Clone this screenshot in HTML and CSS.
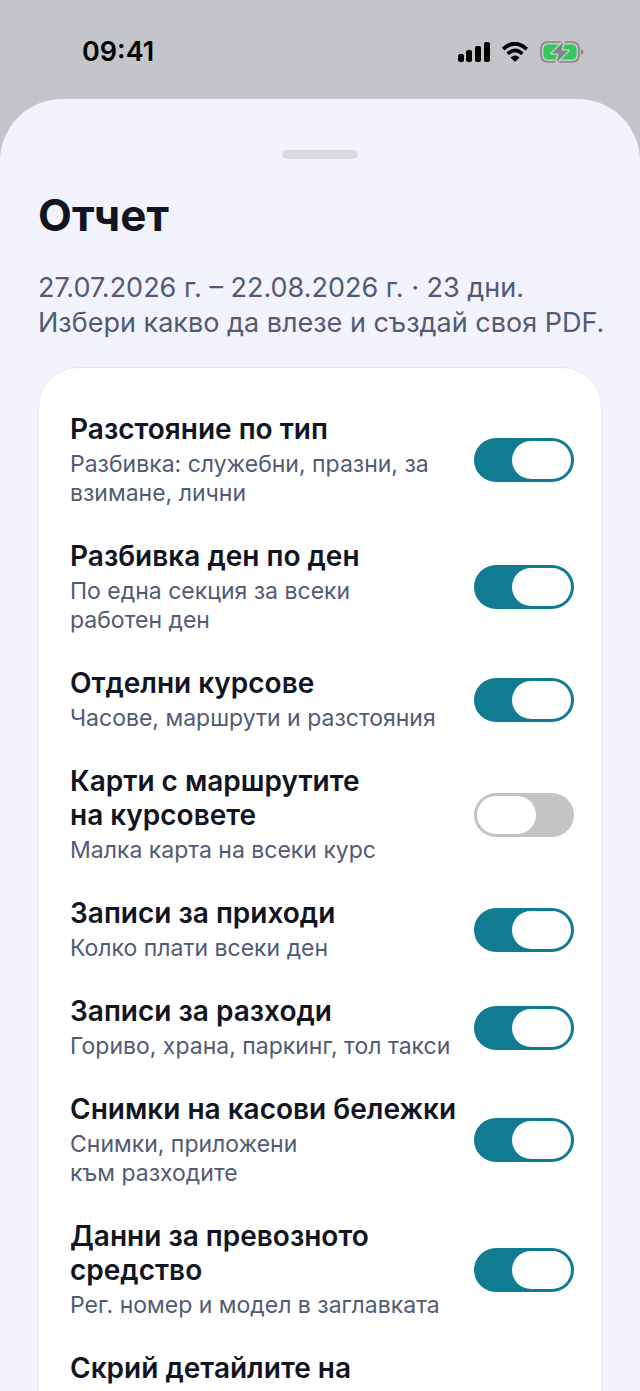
FILE: index.html
```
<!DOCTYPE html>
<html lang="bg">
<head>
    <meta charset="UTF-8">
    <meta name="viewport" content="width=device-width, initial-scale=1.0">
    <title>Отчет</title>
    <link rel="stylesheet" href="styles.css">
</head>
<body>
    <div class="status-bar">
        <span class="time">09:41</span>
        <div class="status-icons">
            <svg class="signal" viewBox="0 0 32 20">
                <rect x="0" y="12" width="6" height="8" rx="2"/>
                <rect x="8" y="8" width="6" height="12" rx="2"/>
                <rect x="17" y="4" width="6" height="16" rx="2"/>
                <rect x="26" y="0" width="6" height="20" rx="2"/>
            </svg>
            <svg class="wifi" viewBox="0 0 28 20">
                <path d="M2.2 7.2Q14-3.8 25.8 7.2" fill="none" stroke="#000" stroke-width="3.8"/>
                <path d="M6.6 11.8Q14 5 21.4 11.8" fill="none" stroke="#000" stroke-width="3.5"/>
                <path d="M9.5 15.4Q14 11.4 18.5 15.4L14.7 19.2Q14 19.8 13.3 19.2Z"/>
            </svg>
            <svg class="battery" viewBox="0 0 44 24">
                <rect x="1" y="2" width="38" height="20" rx="6.5" fill="none" stroke="#838488" stroke-width="1.6"/>
                <rect x="3.5" y="4.5" width="33" height="15" rx="4.5" fill="#34c759"/>
                <path d="M41 9.2Q43.6 10 43.6 12T41 14.8Z" fill="#838488"/>
                <path class="bolt" d="M23.5 1.5L11.5 13.5H18.5L16.5 22.5L28.5 10.5H21.5Z"/>
            </svg>
        </div>
    </div>

    <main class="sheet">
        <div class="grabber"></div>
        <h1 class="heading">Отчет</h1>
        <p class="intro">27.07.2026 г. – 22.08.2026 г. · 23 дни.<br>Избери какво да влезе и създай своя PDF.</p>

        <div class="card">
            <label class="option">
                <span class="text">
                    <span class="title">Разстояние по тип</span>
                    <span class="description">Разбивка: служебни, празни, за<br>взимане, лични</span>
                </span>
                <input class="switch" type="checkbox" checked>
            </label>
            <label class="option">
                <span class="text">
                    <span class="title">Разбивка ден по ден</span>
                    <span class="description">По една секция за всеки<br>работен ден</span>
                </span>
                <input class="switch" type="checkbox" checked>
            </label>
            <label class="option">
                <span class="text">
                    <span class="title">Отделни курсове</span>
                    <span class="description">Часове, маршрути и разстояния</span>
                </span>
                <input class="switch" type="checkbox" checked>
            </label>
            <label class="option">
                <span class="text">
                    <span class="title">Карти с маршрутите<br>на курсовете</span>
                    <span class="description">Малка карта на всеки курс</span>
                </span>
                <input class="switch" type="checkbox">
            </label>
            <label class="option">
                <span class="text">
                    <span class="title">Записи за приходи</span>
                    <span class="description">Колко плати всеки ден</span>
                </span>
                <input class="switch" type="checkbox" checked>
            </label>
            <label class="option">
                <span class="text">
                    <span class="title">Записи за разходи</span>
                    <span class="description">Гориво, храна, паркинг, тол такси</span>
                </span>
                <input class="switch" type="checkbox" checked>
            </label>
            <label class="option">
                <span class="text">
                    <span class="title">Снимки на касови бележки</span>
                    <span class="description">Снимки, приложени<br>към разходите</span>
                </span>
                <input class="switch" type="checkbox" checked>
            </label>
            <label class="option">
                <span class="text">
                    <span class="title">Данни за превозното<br>средство</span>
                    <span class="description">Рег. номер и модел в заглавката</span>
                </span>
                <input class="switch" type="checkbox" checked>
            </label>
            <div class="option">
                <span class="text">
                    <span class="title">Скрий детайлите на</span>
                </span>
            </div>
        </div>
    </main>
</body>
</html>
```

FILE: styles.css
```
* {
    box-sizing: border-box;
}
body {
    margin: 0;
    height: 100vh;
    overflow: hidden;
    display: flex;
    flex-direction: column;
    font-family: Inter, 'Liberation Sans', sans-serif;
    background: #c4c5c9;
    color: #111522;
}
.status-bar {
    display: flex;
    flex-shrink: 0;
    justify-content: space-between;
    align-items: center;
    height: 99px;
    padding: 5px 56px 0 82px;
    color: #000;
}
.time {
    font-size: 27px;
    line-height: 32px;
    font-weight: 600;
}
.status-icons {
    display: flex;
    align-items: center;
    gap: 11px;
}
.signal {
    width: 32px;
    height: 20px;
}
.wifi {
    width: 28px;
    height: 20px;
}
.battery {
    width: 44px;
    height: 24px;
}
.bolt {
    fill: #838488;
    stroke: #c8d8cf;
    stroke-width: 2.4;
    stroke-linejoin: round;
    paint-order: stroke;
}
.sheet {
    flex: 1;
    min-height: 0;
    overflow: hidden;
    padding: 51px 38px 0;
    background: #f2f3fc;
    border-radius: 62px 62px 0 0;
}
.grabber {
    width: 76px;
    height: 9px;
    margin: 0 auto;
    border-radius: 5px;
    background: #dadbdf;
}
.heading {
    margin: 28px 0 0;
    font-size: 44px;
    line-height: 56px;
    font-weight: 700;
}
.intro {
    margin: 27px 0 0;
    font-size: 27px;
    line-height: 35px;
    color: #515b74;
    white-space: nowrap;
}
.card {
    display: flex;
    flex-direction: column;
    gap: 31px;
    margin-top: 27px;
    padding: 44px 27px 44px 31px;
    background: #fff;
    border: 1px solid #e8e9ef;
    border-radius: 40px;
}
.option {
    display: flex;
    justify-content: space-between;
    align-items: center;
}
.text {
    display: flex;
    flex-direction: column;
    gap: 4px;
    white-space: nowrap;
}
.title {
    font-size: 28px;
    line-height: 34px;
    font-weight: 600;
}
.description {
    font-size: 23px;
    line-height: 29px;
    color: #515b74;
}
.switch {
    appearance: none;
    display: flex;
    flex-shrink: 0;
    width: 100px;
    height: 44px;
    margin: 0;
    padding: 3px;
    border-radius: 22px;
    background: #c4c4c6;
    cursor: pointer;
}
.switch::before {
    content: '';
    width: 59px;
    height: 38px;
    border-radius: 19px;
    background: #fff;
}
.switch:checked {
    justify-content: flex-end;
    background: #117c91;
}
```
